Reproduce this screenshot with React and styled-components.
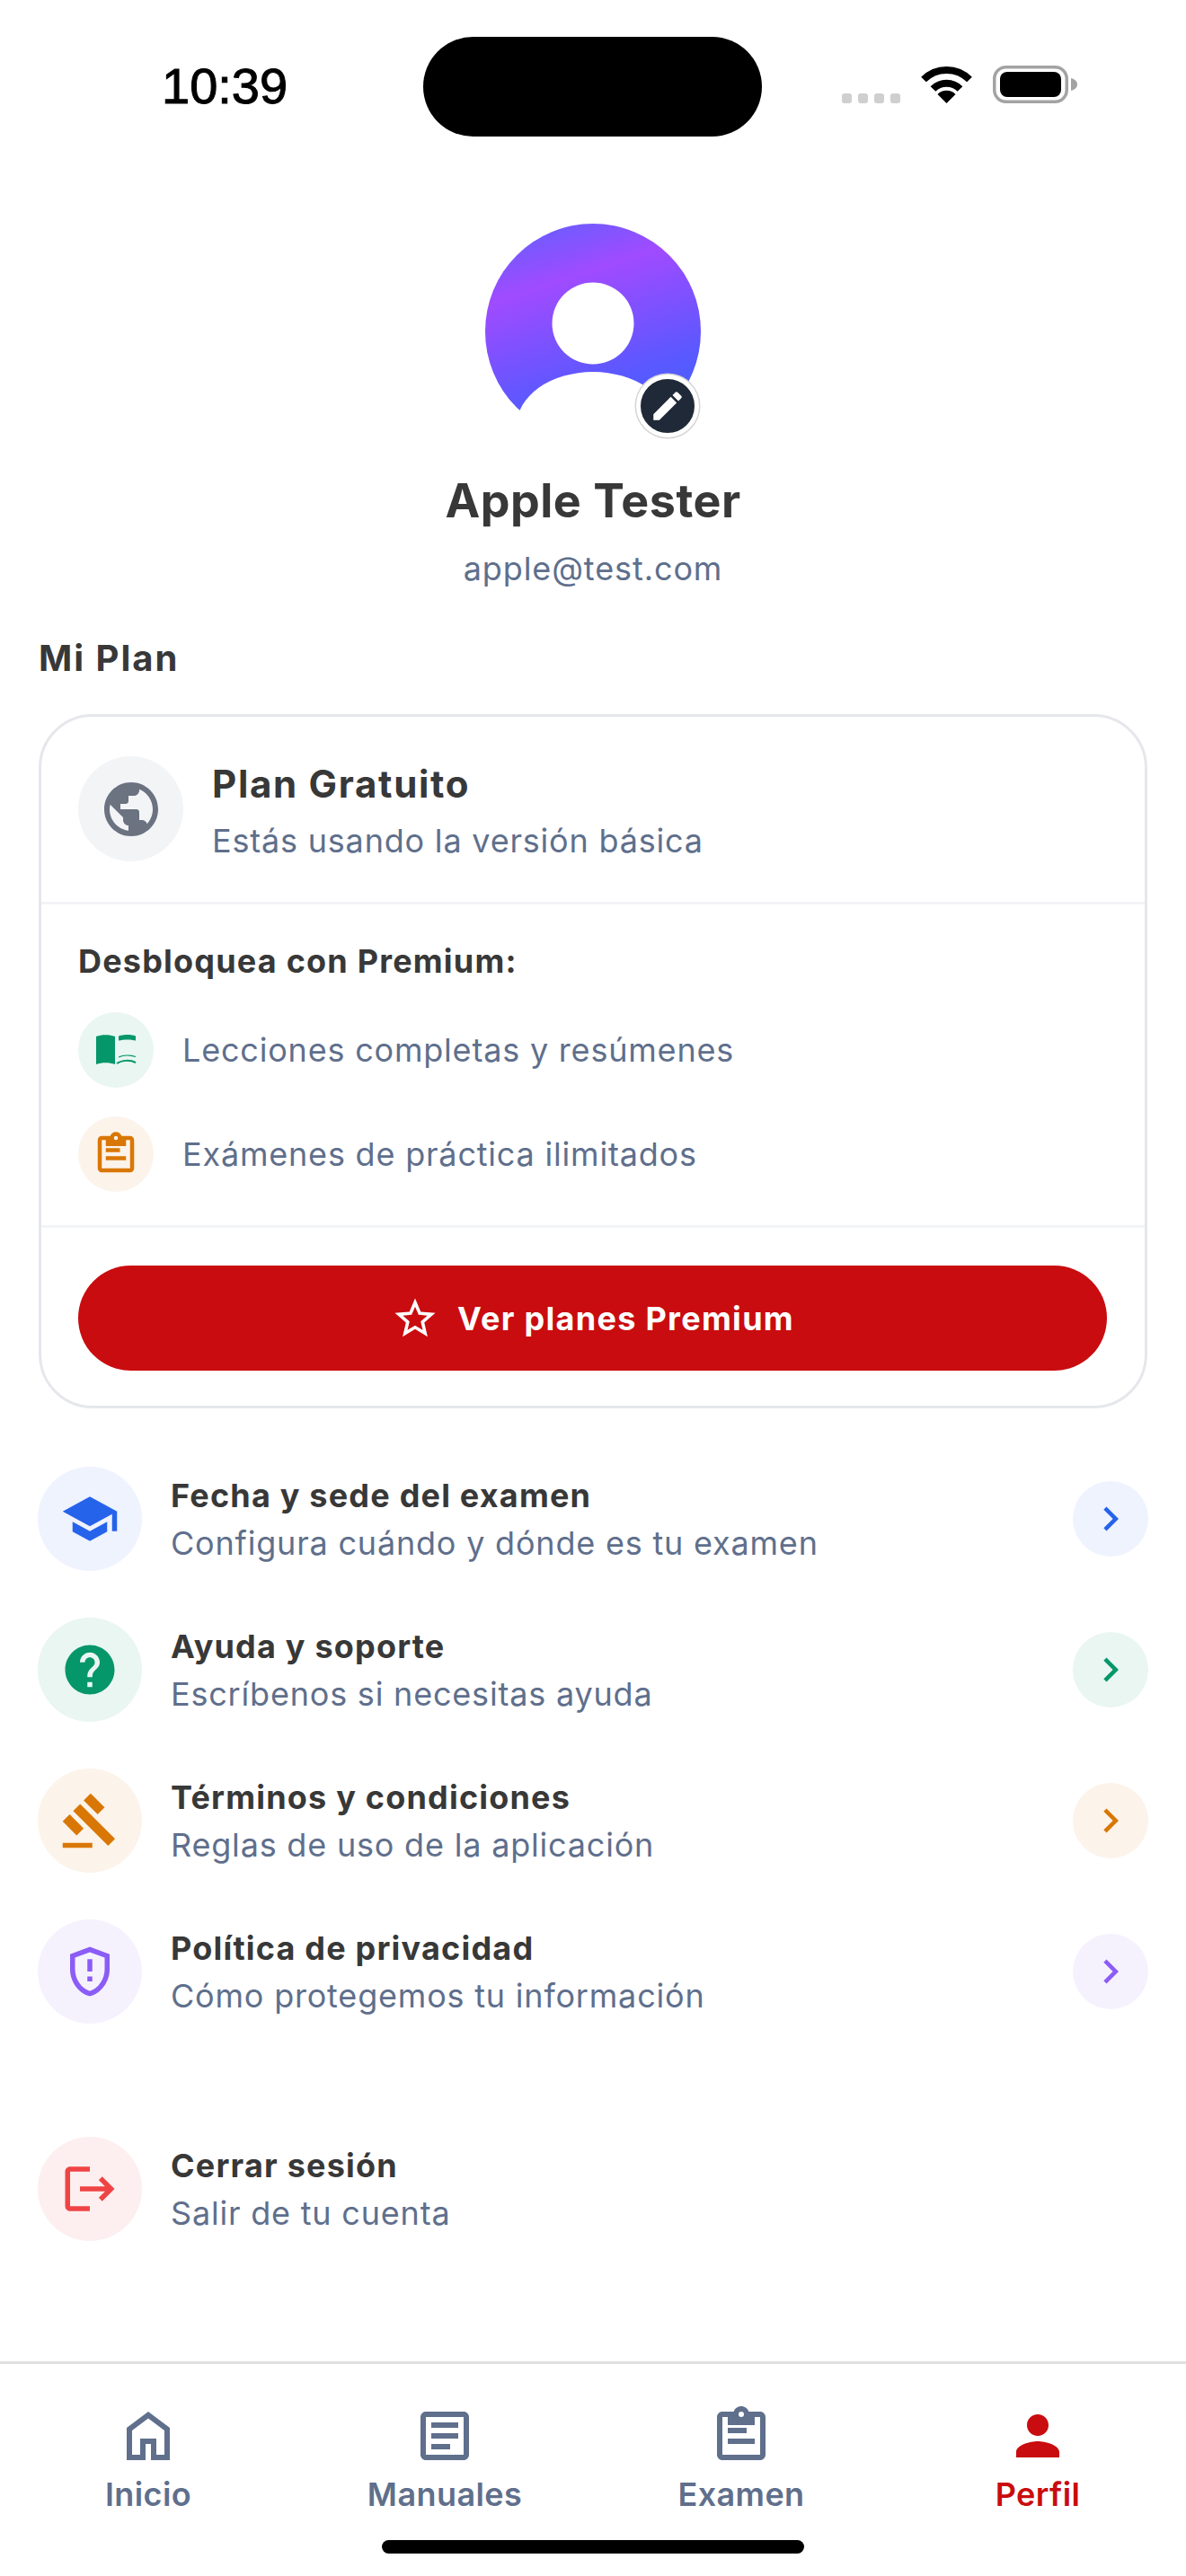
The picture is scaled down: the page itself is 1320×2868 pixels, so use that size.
import React from 'react';
import styled, { createGlobalStyle } from 'styled-components';
import {
  MdChevronRight,
  MdEdit,
  MdHelp,
  MdLogout,
  MdOutlineArticle,
  MdOutlineGppMaybe,
  MdPerson,
  MdPublic,
  MdSchool,
  MdStarBorder
} from 'react-icons/md';

const GlobalStyle = createGlobalStyle`
  html, body {
    margin: 0;
    padding: 0;
    background: #ffffff;
  }
  * {
    box-sizing: border-box;
  }
`;

const tones = {
  blue: { fg: '#2563eb', bg: '#eff3fe' },
  green: { fg: '#059669', bg: '#e9f6f1' },
  orange: { fg: '#d97706', bg: '#fcf3ea' },
  purple: { fg: '#8b5cf6', bg: '#f5f2fe' },
  red: { fg: '#ef4444', bg: '#fdefef' },
  grey: { fg: '#6b7280', bg: '#f3f4f6' }
};

const Page = styled.div`
  width: 1320px;
  height: 2868px;
  overflow: hidden;
  display: flex;
  flex-direction: column;
  font-family: 'Inter', 'Liberation Sans', sans-serif;
  color: #383838;
  background: #ffffff;
`;

const StatusBar = styled.div`
  display: grid;
  grid-template-columns: 471px 377px 472px;
  height: 152px;
  padding-top: 41px;
`;

const Time = styled.div`
  padding-left: 180px;
  padding-top: 30px;
  font-family: 'Liberation Sans', sans-serif;
  font-size: 56px;
  line-height: 50px;
  font-weight: 400;
  color: #000000;
  -webkit-text-stroke: 1px #000000;
`;

const Island = styled.div`
  height: 111px;
  border-radius: 56px;
  background: #000000;
`;

const StatusIcons = styled.div`
  display: flex;
  align-items: flex-end;
  padding: 0 0 37px 89px;
`;

const SignalDots = styled.div`
  display: flex;
  gap: 7px;
  margin-right: 23px;
`;

const SignalDot = styled.span`
  width: 11px;
  height: 11px;
  border-radius: 3px;
  background: #cfcfcf;
`;

const WifiIcon = styled.svg`
  display: block;
  width: 57px;
  height: 42px;
  margin-right: 23px;
`;

const BatteryIcon = styled.svg`
  display: block;
  width: 94px;
  height: 42px;
`;

const Content = styled.div`
  display: flex;
  flex-direction: column;
  padding: 0 42px;
`;

const Profile = styled.div`
  display: flex;
  flex-direction: column;
  align-items: center;
  padding-top: 97px;
`;

const AvatarWrap = styled.div`
  position: relative;
  width: 240px;
  height: 240px;
`;

const AvatarArt = styled.svg`
  display: block;
  width: 240px;
  height: 240px;
`;

const EditBadge = styled.div`
  position: absolute;
  right: 2px;
  bottom: 2px;
  width: 70px;
  height: 70px;
  border-radius: 50%;
  background: #1f2937;
  border: 5px solid #ffffff;
  box-shadow: 0 0 0 1.5px #d4d4d4;
  display: flex;
  align-items: center;
  justify-content: center;
  color: #ffffff;
  font-size: 42px;
`;

const Name = styled.h1`
  margin: 37px 0 0;
  font-size: 52px;
  line-height: 64px;
  font-weight: 700;
  letter-spacing: 0.5px;
  color: #383838;
`;

const Email = styled.div`
  margin-top: 21px;
  font-size: 36px;
  line-height: 44px;
  letter-spacing: 0.9px;
  color: #5f6f8c;
`;

const SectionTitle = styled.h2`
  margin: 54px 0 0 1px;
  font-size: 40px;
  line-height: 48px;
  font-weight: 700;
  letter-spacing: 2px;
  color: #383838;
`;

const PlanCard = styled.div`
  margin: 38px 1px 0;
  height: 773px;
  border: 3px solid #e5e7eb;
  border-radius: 60px;
  display: flex;
  flex-direction: column;
`;

const PlanHeader = styled.div`
  height: 209px;
  padding: 44px 41px 0;
  display: flex;
  gap: 32px;
  border-bottom: 3px solid #f3f4f6;
`;

const Circle = styled.div`
  flex: none;
  width: ${(p) => p.$size}px;
  height: ${(p) => p.$size}px;
  border-radius: 50%;
  background: ${(p) => tones[p.$tone].bg};
  color: ${(p) => tones[p.$tone].fg};
  font-size: ${(p) => p.$icon}px;
  display: flex;
  align-items: center;
  justify-content: center;
`;

const PlanText = styled.div`
  display: flex;
  flex-direction: column;
  gap: 16px;
  padding-top: 6px;
`;

const PlanName = styled.div`
  font-size: 42px;
  line-height: 50px;
  font-weight: 700;
  letter-spacing: 1.7px;
`;

const Muted = styled.div`
  font-size: 36px;
  line-height: 44px;
  letter-spacing: 0.8px;
  color: #5f6f8c;
`;

const Features = styled.div`
  height: 360px;
  padding: 41px 41px 0;
  border-bottom: 3px solid #f3f4f6;
  display: flex;
  flex-direction: column;
`;

const FeaturesTitle = styled.div`
  font-size: 36px;
  line-height: 44px;
  font-weight: 700;
  letter-spacing: 1.2px;
  margin-bottom: 35px;
`;

const FeatureList = styled.div`
  display: flex;
  flex-direction: column;
  gap: 32px;
`;

const FeatureRow = styled.div`
  display: flex;
  align-items: center;
  gap: 32px;
`;

const ButtonWrap = styled.div`
  padding: 42px 42px 0 41px;
`;

const PremiumButton = styled.button`
  width: 100%;
  height: 117px;
  border: none;
  border-radius: 59px;
  background: #c90c0f;
  color: #ffffff;
  display: flex;
  align-items: center;
  justify-content: center;
  gap: 20px;
  font-family: inherit;
  font-size: 36px;
  font-weight: 700;
  letter-spacing: 1.3px;
  svg {
    font-size: 54px;
  }
`;

const Menu = styled.div`
  display: flex;
  flex-direction: column;
  gap: 52px;
  margin-top: 65px;
`;

const MenuRow = styled.div`
  display: flex;
  align-items: center;
  gap: 32px;
  margin-top: ${(p) => (p.$pushed ? '74px' : '0')};
`;

const MenuText = styled.div`
  flex: 1;
  display: flex;
  flex-direction: column;
  gap: 9px;
  padding-top: 1px;
`;

const MenuTitle = styled.div`
  font-size: 36px;
  line-height: 44px;
  font-weight: 700;
  letter-spacing: 1.2px;
  color: #383838;
`;

const TabBar = styled.nav`
  margin-top: 134px;
  border-top: 3px solid #e0e0e0;
  display: grid;
  grid-template-columns: repeat(4, 330px);
  padding-top: 44px;
`;

const Tab = styled.div`
  display: flex;
  flex-direction: column;
  align-items: center;
  gap: 7px;
  color: ${(p) => (p.$active ? '#c90c0f' : '#5f6f8c')};
  font-size: 36px;
  line-height: 44px;
  font-weight: 600;
  letter-spacing: 0.4px;
  svg {
    font-size: 72px;
    display: block;
  }
`;

const HomeIndicator = styled.div`
  width: 470px;
  height: 15px;
  margin: 29px auto 0;
  border-radius: 8px;
  background: #000000;
`;

const Glyph = ({ d }) => (
  <svg width="1em" height="1em" viewBox="0 0 24 24" fill="currentColor" fillRule="evenodd">
    <path d={d} />
  </svg>
);

const homePath = 'M6 19h3v-6h6v6h3v-9l-6-4.5L6 10v9Zm-2 2V9l8-6 8 6v12h-7v-6h-2v6H4Z';
const gavelPath =
  'M1 21h12v2H1v-2zM5.245 8.07l2.83-2.827 14.14 14.142-2.828 2.828L5.245 8.07zM12.317 1l5.657 5.656-2.83 2.83-5.654-5.66L12.317 1zM3.825 9.485l5.657 5.657-2.828 2.828-5.657-5.657 2.828-2.828z';
const clipboardPath =
  'M5 3h4.2C9.6 1.8 10.7 1 12 1s2.4.8 2.8 2H19c1.1 0 2 .9 2 2v14c0 1.1-.9 2-2 2H5c-1.1 0-2-.9-2-2V5c0-1.1.9-2 2-2Zm0 2v14h14V5h-2v3H7V5H5Zm7-2a1 1 0 1 0 0 2 1 1 0 0 0 0-2ZM7 9h7v2H7V9Zm0 4h10v2H7v-2Z';

const ClipboardIcon = () => <Glyph d={clipboardPath} />;

// book with a solid left page and a mostly open right page
const BookIcon = () => (
  <svg width="54" height="54" viewBox="0 0 54 54" fill="currentColor">
    <path d="M5 12C11 9.5 20 9.5 26 12V43C20 40.5 11 40.5 5 43Z" />
    <path d="M30 11.5C36 9.5 44 9.5 49 11.5V16.5C44 15 36 15 30 16.5Z" />
    <path d="M30 35C35 32.5 43 32.5 49 34.5" fill="none" stroke="currentColor" strokeWidth="1.2" />
    <path d="M28 42C34 38 43 38 49 41" fill="none" stroke="currentColor" strokeWidth="2" />
  </svg>
);

const features = [
  { tone: 'green', icon: <BookIcon />, label: 'Lecciones completas y resúmenes' },
  { tone: 'orange', icon: <ClipboardIcon />, label: 'Exámenes de práctica ilimitados' }
];

const menuItems = [
  {
    tone: 'blue',
    icon: <MdSchool />,
    title: 'Fecha y sede del examen',
    subtitle: 'Configura cuándo y dónde es tu examen'
  },
  {
    tone: 'green',
    icon: <MdHelp />,
    title: 'Ayuda y soporte',
    subtitle: 'Escríbenos si necesitas ayuda'
  },
  {
    tone: 'orange',
    icon: <Glyph d={gavelPath} />,
    title: 'Términos y condiciones',
    subtitle: 'Reglas de uso de la aplicación'
  },
  {
    tone: 'purple',
    icon: <MdOutlineGppMaybe />,
    title: 'Política de privacidad',
    subtitle: 'Cómo protegemos tu información'
  }
];

const tabs = [
  { label: 'Inicio', icon: <Glyph d={homePath} /> },
  { label: 'Manuales', icon: <MdOutlineArticle /> },
  { label: 'Examen', icon: <ClipboardIcon /> },
  { label: 'Perfil', icon: <MdPerson />, active: true }
];

function Avatar() {
  return (
    <AvatarArt viewBox="0 0 240 240">
      <defs>
        <linearGradient id="avatarFill" x1="0.34" y1="0" x2="0.66" y2="1">
          <stop offset="0" stopColor="#6f5bff" />
          <stop offset="0.24" stopColor="#a04bff" />
          <stop offset="0.72" stopColor="#5a58ff" />
          <stop offset="1" stopColor="#3f66ff" />
        </linearGradient>
      </defs>
      <circle cx="120" cy="120" r="120" fill="url(#avatarFill)" />
      <circle cx="120" cy="111" r="45.5" fill="#ffffff" />
      <ellipse cx="120" cy="225" rx="85" ry="60" fill="#ffffff" />
    </AvatarArt>
  );
}

export default function App() {
  return (
    <Page>
      <GlobalStyle />
      <StatusBar>
        <Time>10:39</Time>
        <Island />
        <StatusIcons>
          <SignalDots>
            <SignalDot />
            <SignalDot />
            <SignalDot />
            <SignalDot />
          </SignalDots>
          <WifiIcon viewBox="0 0 57 42">
            <path d="M3 15.5A36 36 0 0 1 54 15.5" fill="none" stroke="#000" strokeWidth="8" />
            <path d="M13.5 26A21 21 0 0 1 43.5 26" fill="none" stroke="#000" strokeWidth="8" />
            <path d="M28.5 42L18.5 32A14 14 0 0 1 38.5 32Z" fill="#000" />
          </WifiIcon>
          <BatteryIcon viewBox="0 0 94 42">
            <rect x="1.75" y="1.75" width="80.5" height="38.5" rx="13" fill="none" stroke="#a3a3a3" strokeWidth="3.5" />
            <rect x="8" y="7" width="68" height="28" rx="8" fill="#000" />
            <path d="M87 14c4 1 7 3.5 7 7s-3 6-7 7z" fill="#a3a3a3" />
          </BatteryIcon>
        </StatusIcons>
      </StatusBar>

      <Content>
        <Profile>
          <AvatarWrap>
            <Avatar />
            <EditBadge>
              <MdEdit />
            </EditBadge>
          </AvatarWrap>
          <Name>Apple Tester</Name>
          <Email>apple@test.com</Email>
        </Profile>

        <SectionTitle>Mi Plan</SectionTitle>

        <PlanCard>
          <PlanHeader>
            <Circle $size={117} $icon={72} $tone="grey">
              <MdPublic />
            </Circle>
            <PlanText>
              <PlanName>Plan Gratuito</PlanName>
              <Muted>Estás usando la versión básica</Muted>
            </PlanText>
          </PlanHeader>

          <Features>
            <FeaturesTitle>Desbloquea con Premium:</FeaturesTitle>
            <FeatureList>
              {features.map((item) => (
                <FeatureRow key={item.label}>
                  <Circle $size={84} $icon={54} $tone={item.tone}>
                    {item.icon}
                  </Circle>
                  <Muted>{item.label}</Muted>
                </FeatureRow>
              ))}
            </FeatureList>
          </Features>

          <ButtonWrap>
            <PremiumButton>
              <MdStarBorder />
              Ver planes Premium
            </PremiumButton>
          </ButtonWrap>
        </PlanCard>

        <Menu>
          {menuItems.map((item) => (
            <MenuRow key={item.title}>
              <Circle $size={116} $icon={66} $tone={item.tone}>
                {item.icon}
              </Circle>
              <MenuText>
                <MenuTitle>{item.title}</MenuTitle>
                <Muted>{item.subtitle}</Muted>
              </MenuText>
              <Circle $size={84} $icon={54} $tone={item.tone}>
                <MdChevronRight />
              </Circle>
            </MenuRow>
          ))}
          <MenuRow $pushed>
            <Circle $size={116} $icon={66} $tone="red">
              <MdLogout />
            </Circle>
            <MenuText>
              <MenuTitle>Cerrar sesión</MenuTitle>
              <Muted>Salir de tu cuenta</Muted>
            </MenuText>
          </MenuRow>
        </Menu>
      </Content>

      <TabBar>
        {tabs.map((tab) => (
          <Tab key={tab.label} $active={tab.active}>
            {tab.icon}
            {tab.label}
          </Tab>
        ))}
      </TabBar>
      <HomeIndicator />
    </Page>
  );
}
